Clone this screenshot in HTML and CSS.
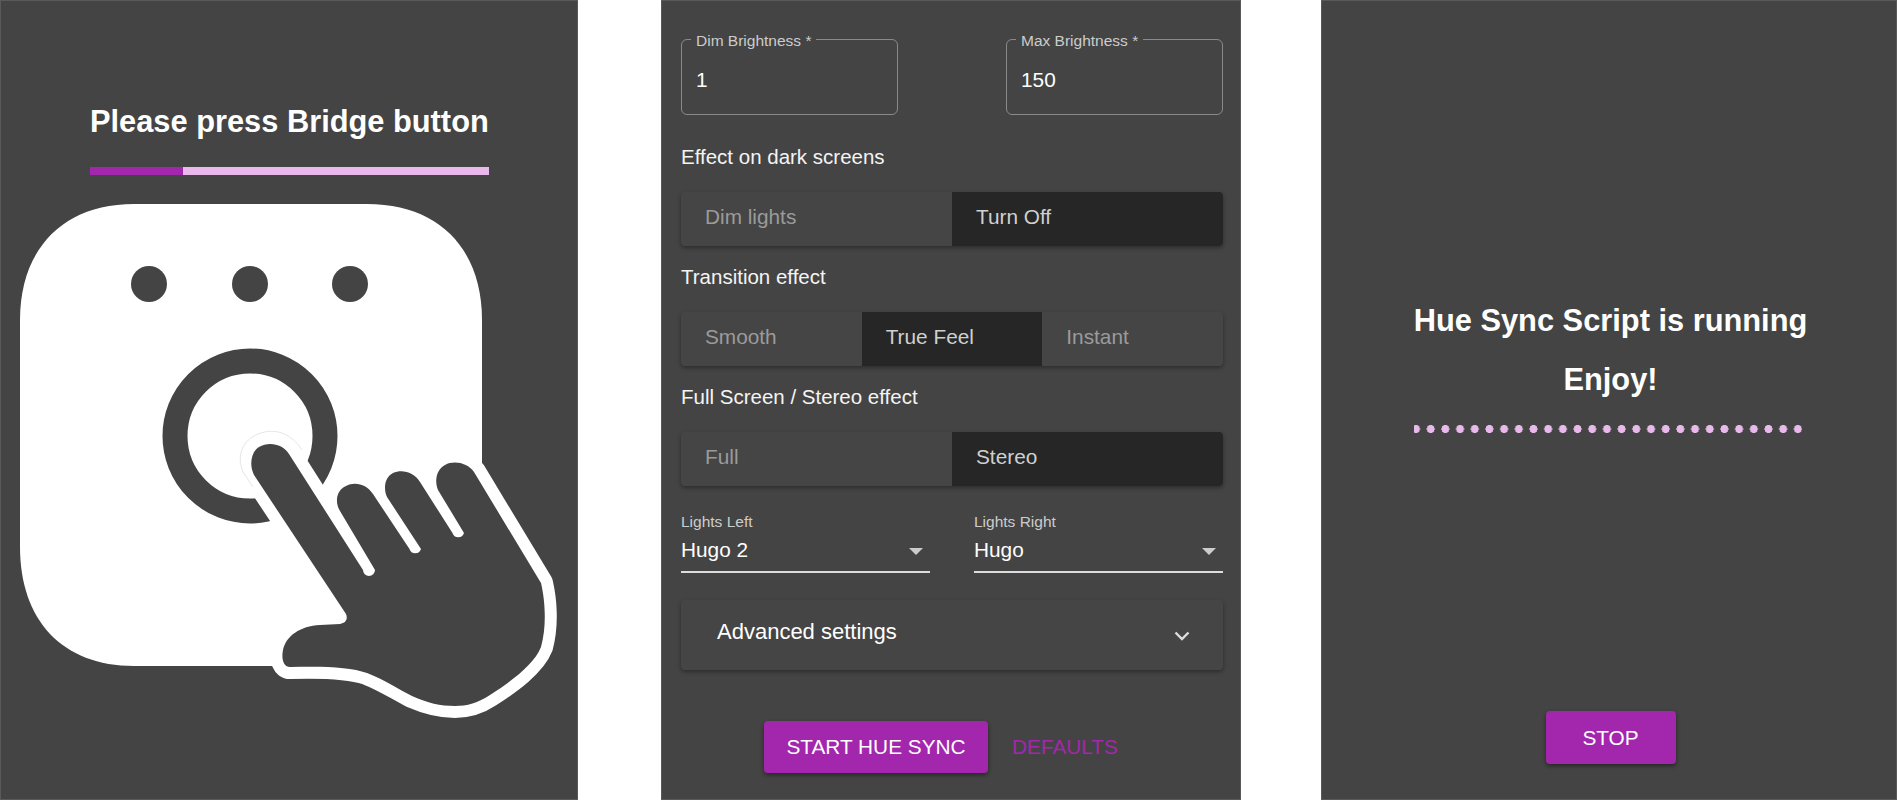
FILE: index.html
```html
<!DOCTYPE html>
<html lang="en">
<head>
    <meta charset="UTF-8">
    <meta name="viewport" content="width=device-width, initial-scale=1.0">
    <title>Hue Sync</title>
    <link rel="stylesheet" href="styles.css">
</head>
<body>

<section class="panel panel-bridge">
    <h2 class="title">Please press Bridge button</h2>
    <div class="progress"><div class="progress-fill"></div></div>
    <svg class="bridge" viewBox="0 204 578 520" width="578" height="520">
        <path fill="#fff" d="M134 204H367C440 204 482 250 482 320V547C482 620 440 666 367 666H134C62 666 20 620 20 547V320C20 250 62 204 134 204Z"/>
        <circle cx="149" cy="284" r="18" fill="#444"/>
        <circle cx="250" cy="284" r="18" fill="#444"/>
        <circle cx="350" cy="284" r="18" fill="#444"/>
        <circle cx="250" cy="436" r="75" fill="none" stroke="#444" stroke-width="25"/>
        <path class="hand" d="M254 475C249 465 251 452 259 447C269 441 283 444 289 454L363 570A6 6 0 0 0 375 570L340 511C335 503 336 492 344 487C353 481 366 483 373 494L409.5 549A6 6 0 0 0 421 549L387 497C383 488 385 477 393 473C402 469 414 472 420 482L452.5 533A6 6 0 0 0 464 533L438 490C434 480 437 469 445 465C454 460 468 463 474 472L541 583C545 600 547 625 541 647C534 665 510 682 490 695C478 703 467 706 455 706C440 706 428 703 412 696C398 689 385 680 367 673C350 667 325 666 290 667C284 667 281 660 283 650C286 636 300 626 320 625L340 624C346 623 348 619 346 614Z"/>
        <path class="tip-edge" d="M253 487L243 472C236 455 243 440 258 434C275 427 292 434 302 450"/>
    </svg>
</section>

<section class="panel panel-settings">
    <div class="fields">
        <div class="field">
            <fieldset><legend>Dim Brightness *</legend><span class="field-value">1</span></fieldset>
        </div>
        <div class="field">
            <fieldset><legend>Max Brightness *</legend><span class="field-value">150</span></fieldset>
        </div>
    </div>

    <p class="group-label group-first">Effect on dark screens</p>
    <div class="toggle">
        <button class="toggle-item">Dim lights</button>
        <button class="toggle-item selected">Turn Off</button>
    </div>

    <p class="group-label">Transition effect</p>
    <div class="toggle">
        <button class="toggle-item">Smooth</button>
        <button class="toggle-item selected">True Feel</button>
        <button class="toggle-item">Instant</button>
    </div>

    <p class="group-label">Full Screen / Stereo effect</p>
    <div class="toggle">
        <button class="toggle-item">Full</button>
        <button class="toggle-item selected">Stereo</button>
    </div>

    <div class="selects">
        <div class="select">
            <label>Lights Left</label>
            <div class="select-value">Hugo 2<span class="caret"></span></div>
        </div>
        <div class="select">
            <label>Lights Right</label>
            <div class="select-value">Hugo<span class="caret"></span></div>
        </div>
    </div>

    <div class="accordion">
        <span class="accordion-title">Advanced settings</span>
        <svg viewBox="0 0 16 10" width="16" height="10">
            <path d="M1.5 1.5L8 8L14.5 1.5" fill="none" stroke="#ddd" stroke-width="2.4"/>
        </svg>
    </div>

    <div class="actions">
        <button class="btn-main btn-start">START HUE SYNC</button>
        <button class="btn-text">DEFAULTS</button>
    </div>
</section>

<section class="panel panel-running">
    <h2 class="title">Hue Sync Script is running</h2>
    <h2 class="title title-second">Enjoy!</h2>
    <div class="dots"></div>
    <button class="btn-main btn-stop">STOP</button>
</section>

</body>
</html>
```

FILE: styles.css
```css
html {
    height: 800px;
    overflow: hidden;
}

body {
    font-family: "Liberation Sans", Arial, sans-serif;
    margin: 0;
    padding: 0;
    background-color: #fff;
    display: flex;
    height: 800px;
    overflow: hidden;
}

.panel {
    height: 800px;
    box-sizing: border-box;
    background-color: #444;
    box-shadow: inset 0 0 0 1px #5a5a5a;
    color: #fff;
    flex: none;
}

.title {
    margin: 0;
    font-size: 30.8px;
    line-height: 40px;
    font-weight: bold;
    white-space: nowrap;
}

/* left phone */
.panel-bridge {
    width: 578px;
    padding-top: 102px;
}

.panel-bridge .title {
    margin-left: 90px;
}

.progress {
    width: 399px;
    height: 8px;
    margin: 25px 0 29px 90px;
    background-color: #e8b9ea;
}

.progress-fill {
    width: 93px;
    height: 8px;
    background-color: #a327ad;
}

.bridge {
    display: block;
}

.hand {
    fill: #444;
    stroke: #fff;
    stroke-width: 24;
    stroke-linejoin: round;
    paint-order: stroke fill;
}

.tip-edge {
    fill: none;
    stroke: #e6e6e6;
    stroke-width: 1;
}

/* middle phone */
.panel-settings {
    width: 580px;
    margin-left: 83px;
    padding: 28px 18px 0 20px;
}

.fields {
    display: flex;
    justify-content: space-between;
}

.field {
    width: 217px;
}

fieldset {
    margin: 0;
    height: 87px;
    box-sizing: border-box;
    padding: 0 14px;
    border: 1.5px solid #8a8a8a;
    border-radius: 6px;
}

legend {
    padding: 4px 5px 0;
    margin-left: -5px;
    font-size: 15.5px;
    line-height: 18px;
    color: #ccc;
}

.field-value {
    display: block;
    margin-top: 18px;
    font-size: 20.8px;
    line-height: 24px;
}

.group-label {
    margin: 0;
    height: 66px;
    padding-top: 19px;
    box-sizing: border-box;
    font-size: 20.5px;
    line-height: 24px;
    color: #f4f4f4;
}

.group-first {
    padding-top: 30px;
    height: 77px;
}

.toggle {
    display: flex;
    height: 54px;
    border-radius: 4px;
    background-color: #454545;
    box-shadow: 0 2px 4px rgba(0, 0, 0, 0.35);
    overflow: hidden;
}

.toggle-item {
    flex: 1;
    border: none;
    background: none;
    padding: 0 24px 4px;
    text-align: left;
    font-family: inherit;
    font-size: 20.8px;
    color: #9b9b9b;
}

.toggle-item.selected {
    background-color: #262626;
    color: #d0d0d0;
}

.selects {
    display: flex;
    justify-content: space-between;
    margin-top: 27px;
}

.select {
    width: 249px;
}

.select label {
    display: block;
    font-size: 15.5px;
    line-height: 18px;
    color: #ccc;
}

.select-value {
    position: relative;
    height: 42px;
    padding-top: 7px;
    box-sizing: border-box;
    font-size: 20.8px;
    line-height: 24px;
    border-bottom: 2px solid #ddd;
}

.caret {
    position: absolute;
    right: 7px;
    top: 17px;
    border-left: 7px solid transparent;
    border-right: 7px solid transparent;
    border-top: 7px solid #ccc;
}

.accordion {
    display: flex;
    justify-content: space-between;
    align-items: center;
    height: 70px;
    margin-top: 27px;
    padding: 0 33px 0 36px;
    box-sizing: border-box;
    border-radius: 4px;
    background-color: #454545;
    box-shadow: 0 2px 4px rgba(0, 0, 0, 0.35);
    font-size: 22px;
}

.accordion-title {
    margin-bottom: 6px;
}

.accordion svg {
    margin-top: 2px;
}

.actions {
    display: flex;
    align-items: center;
    margin: 51px 0 0 83px;
}

.btn-main {
    height: 52px;
    padding: 0;
    border: none;
    border-radius: 4px;
    background-color: #a327ad;
    color: #fff;
    font-family: inherit;
    font-size: 20.8px;
    box-shadow: 0 2px 4px rgba(0, 0, 0, 0.45);
}

.btn-start {
    width: 224px;
}

.btn-text {
    margin-left: 24px;
    padding: 0;
    border: none;
    background: none;
    color: #a327ad;
    font-family: inherit;
    font-size: 20.8px;
}

/* right phone */
.panel-running {
    width: 576px;
    margin-left: 80px;
    padding: 301px 0 0 3px;
    display: flex;
    flex-direction: column;
    align-items: center;
}

.title-second {
    margin-top: 19px;
}

.dots {
    width: 388px;
    height: 8px;
    margin: 25px 5px 0 0;
    background-image: radial-gradient(circle, #e8b9ea 3.8px, transparent 4.2px);
    background-size: 14.7px 8px;
    background-repeat: repeat-x;
    background-position: -5.35px 0;
}

.btn-stop {
    width: 130px;
    height: 53px;
    margin-top: 278px;
}
```
